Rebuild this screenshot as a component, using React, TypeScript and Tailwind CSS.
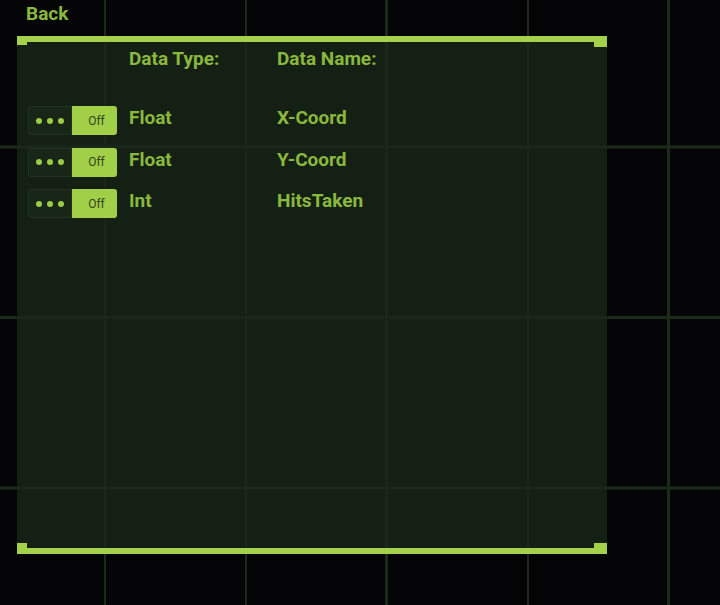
import React from 'react';

type Row = { type: string; name: string };

const rows: Row[] = [
  { type: 'Float', name: 'X-Coord' },
  { type: 'Float', name: 'Y-Coord' },
  { type: 'Int', name: 'HitsTaken' },
];

const Toggle: React.FC = () => {
  return (
    <div className="flex w-[89px] h-[29px] shrink-0">
      <div className="flex items-center justify-center gap-[5px] w-[44px] h-full bg-[#182618] border border-[#223322] rounded-l-[3px]">
        <span className="w-[6px] h-[6px] rounded-full bg-[#9ccb45]"></span>
        <span className="w-[6px] h-[6px] rounded-full bg-[#9ccb45]"></span>
        <span className="w-[6px] h-[6px] rounded-full bg-[#9ccb45]"></span>
      </div>
      <div className="flex-1 flex items-center justify-center h-full bg-[#a2cf48] rounded-r-[3px] text-[12px] text-[#33451f] pl-[4px]">
        Off
      </div>
    </div>
  );
};

export default function App() {
  return (
    <div
      className="w-[720px] h-[605px] overflow-hidden bg-[#050508] bg-[linear-gradient(to_right,#1b2a1b_3px,transparent_3px),linear-gradient(to_bottom,#1b2a1b_3px,transparent_3px)] bg-[size:141px_170.5px] bg-[position:103px_145.5px] text-[#8ab83d]"
      style={{ fontFamily: 'Roboto, "Liberation Sans", sans-serif' }}
    >
      <div className="pl-[26px] pt-[2px] h-[36px] text-[19px] leading-[24px] font-bold">Back</div>

      <div className="relative ml-[17px] w-[590px] h-[518px] bg-[rgba(26,40,24,0.78)]">
        <div className="h-[6px] bg-[#a3d14a]"></div>
        <div className="absolute left-0 top-0 w-[10px] h-[9px] bg-[#a3d14a]"></div>
        <div className="absolute right-0 top-0 w-[13px] h-[11px] bg-[#a3d14a]"></div>

        <div className="flex flex-col h-[506px] pl-[11px] pt-[4px]">
          <div className="flex text-[19px] leading-[24px] font-bold pt-[1px]">
            <div className="w-[89px] shrink-0"></div>
            <div className="w-[148px] ml-[12px]">Data Type:</div>
            <div>Data Name:</div>
          </div>

          <div className="flex flex-col gap-[12.5px] mt-[35px]">
            {rows.map((r, i) => (
              <div key={i} className="flex items-center">
                <Toggle />
                <div className="w-[148px] ml-[12px] text-[19px] leading-[24px] font-bold -mt-[5px]">{r.type}</div>
                <div className="text-[19px] leading-[24px] font-bold -mt-[5px]">{r.name}</div>
              </div>
            ))}
          </div>
        </div>

        <div className="h-[6px] bg-[#a3d14a]"></div>
        <div className="absolute left-0 bottom-0 w-[10px] h-[11px] bg-[#a3d14a]"></div>
        <div className="absolute right-0 bottom-0 w-[13px] h-[11px] bg-[#a3d14a]"></div>
      </div>
    </div>
  );
}
